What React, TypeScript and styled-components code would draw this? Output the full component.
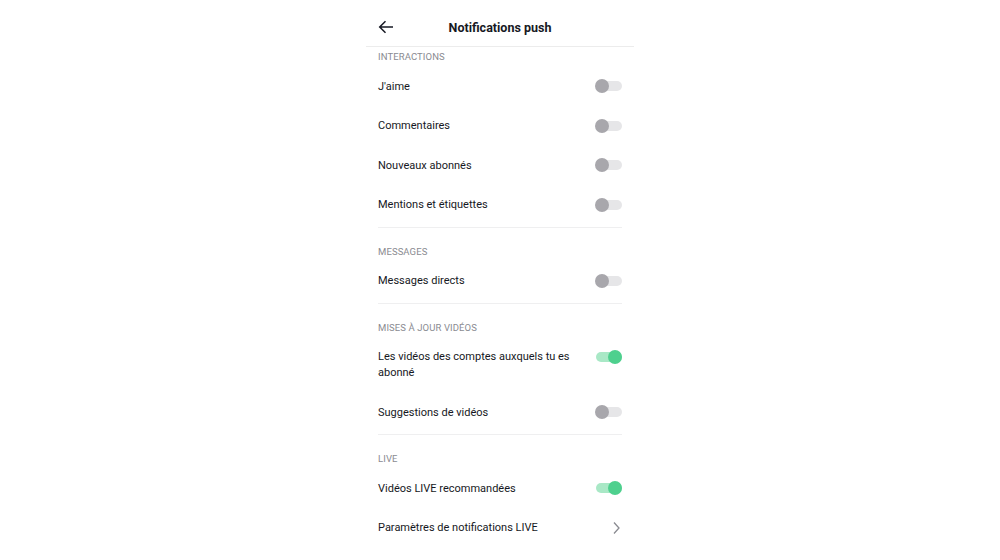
import React from "react"
import styled, { createGlobalStyle } from "styled-components"

const GlobalStyle = createGlobalStyle`
  html, body {
    margin: 0;
    padding: 0;
    background: #ffffff;
    font-family: Roboto, "Liberation Sans", Arial, sans-serif;
    color: #161823;
  }
`

const Page = styled.div`
  width: 1000px;
  height: 560px;
  display: flex;
  justify-content: center;
  overflow: hidden;
`

const Phone = styled.div`
  width: 268px;
  display: flex;
  flex-direction: column;
`

const Header = styled.div`
  height: 46px;
  border-bottom: 1px solid #ececec;
  display: grid;
  grid-template-columns: 40px 1fr 40px;
  align-items: center;
  padding: 0 12px;
`

const Back = styled.div`
  display: flex;
  align-items: center;
  padding-top: 8px;
`

const Title = styled.div`
  text-align: center;
  font-weight: 700;
  font-size: 12.5px;
  padding-top: 8px;
`

const Section = styled.div<{ $first?: boolean; $last?: boolean }>`
  margin: 0 12px;
  padding: ${(p) => (p.$first ? "0" : "14px")} 0 2px;
  border-bottom: ${(p) => (p.$last ? "none" : "1px solid #efeff0")};
`

const Label = styled.div`
  height: 19.5px;
  line-height: 19.5px;
  font-size: 9.5px;
  color: #8a8b91;
  text-transform: uppercase;
  letter-spacing: 0.1px;
`

const Row = styled.div`
  box-sizing: border-box;
  padding: 12px 0 11.5px;
  display: flex;
  align-items: flex-start;
  justify-content: space-between;
  gap: 16px;
`

const RowText = styled.div`
  font-size: 11px;
  line-height: 16px;
  max-width: 200px;
`

const Track = styled.div<{ $on?: boolean }>`
  position: relative;
  width: 26px;
  height: 10px;
  border-radius: 5px;
  margin-top: 2.5px;
  flex-shrink: 0;
  background: ${(p) => (p.$on ? "#a9e8c6" : "#e6e6e8")};
`

const Knob = styled.div<{ $on?: boolean }>`
  position: absolute;
  top: -2px;
  left: ${(p) => (p.$on ? "12px" : "-1px")};
  width: 14px;
  height: 14px;
  border-radius: 50%;
  background: ${(p) => (p.$on ? "#4ed08e" : "#a8a7ac")};
`

function Toggle({ on }: { on?: boolean }) {
  return (
    <Track $on={on}>
      <Knob $on={on} />
    </Track>
  )
}

const Chevron = () => (
  <svg width="10" height="14" viewBox="0 0 10 14" style={{ marginTop: 1, marginRight: 1 }}>
    <path d="M3 1.5 L8 7 L3 12.5" fill="none" stroke="#8a8b91" strokeWidth="1.3" />
  </svg>
)

type Item = { text: string; on?: boolean; link?: boolean }
type Group = { title: string; items: Item[] }

const groups: Group[] = [
  {
    title: "Interactions",
    items: [
      { text: "J'aime" },
      { text: "Commentaires" },
      { text: "Nouveaux abonnés" },
      { text: "Mentions et étiquettes" },
    ],
  },
  { title: "Messages", items: [{ text: "Messages directs" }] },
  {
    title: "Mises à jour vidéos",
    items: [
      { text: "Les vidéos des comptes auxquels tu es abonné", on: true },
      { text: "Suggestions de vidéos" },
    ],
  },
  {
    title: "Live",
    items: [
      { text: "Vidéos LIVE recommandées", on: true },
      { text: "Paramètres de notifications LIVE", link: true },
    ],
  },
]

export default function App() {
  return (
    <Page>
      <GlobalStyle />
      <Phone>
        <Header>
          <Back>
            <svg width="16" height="14" viewBox="0 0 16 14">
              <path d="M15 7 H1.8 M7.5 1.2 L1.7 7 L7.5 12.8" fill="none" stroke="#161823" strokeWidth="1.5" />
            </svg>
          </Back>
          <Title>Notifications push</Title>
          <div />
        </Header>
        {groups.map((g, i) => (
          <Section key={g.title} $first={i === 0} $last={i === groups.length - 1}>
            <Label>{g.title}</Label>
            {g.items.map((it) => (
              <Row key={it.text}>
                <RowText>{it.text}</RowText>
                {it.link ? <Chevron /> : <Toggle on={it.on} />}
              </Row>
            ))}
          </Section>
        ))}
      </Phone>
    </Page>
  )
}
